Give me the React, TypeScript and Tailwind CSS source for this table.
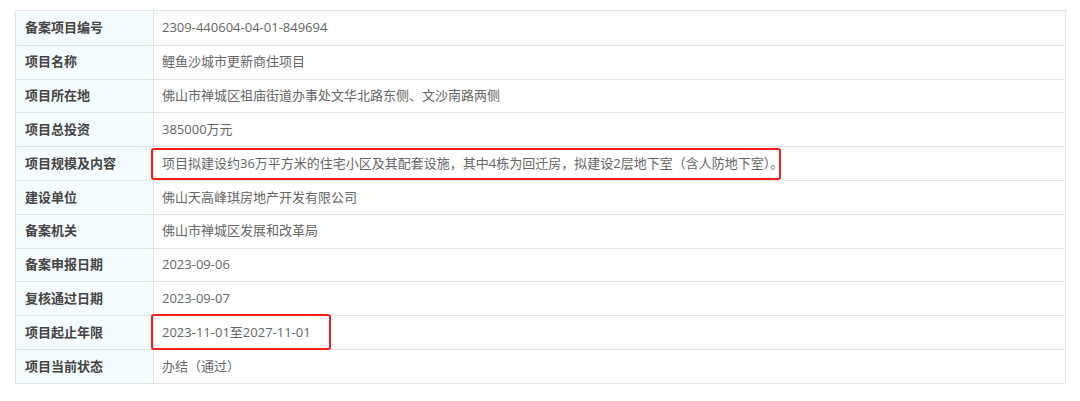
const ROWS: { label: string; value: string; mark?: 'wide' | 'date' }[] = [
  { label: '备案项目编号', value: '2309-440604-04-01-849694' },
  { label: '项目名称', value: '鲤鱼沙城市更新商住项目' },
  { label: '项目所在地', value: '佛山市禅城区祖庙街道办事处文华北路东侧、文沙南路两侧' },
  { label: '项目总投资', value: '385000万元' },
  {
    label: '项目规模及内容',
    value: '项目拟建设约36万平方米的住宅小区及其配套设施，其中4栋为回迁房，拟建设2层地下室（含人防地下室）。',
    mark: 'wide',
  },
  { label: '建设单位', value: '佛山天高峰琪房地产开发有限公司' },
  { label: '备案机关', value: '佛山市禅城区发展和改革局' },
  { label: '备案申报日期', value: '2023-09-06' },
  { label: '复核通过日期', value: '2023-09-07' },
  { label: '项目起止年限', value: '2023-11-01至2027-11-01', mark: 'date' },
  { label: '项目当前状态', value: '办结（通过）' },
];

export default function App() {
  return (
    <div
      className="w-[1080px] h-[401px] bg-white pt-[10px] pl-[15px]"
      style={{ fontFamily: '"Open Sans", "Noto Sans CJK SC", sans-serif' }}
    >
      <div className="w-[1051px] border border-[#e3e3e3] text-[13px]">
        {ROWS.map((row, i) => (
          <div
            key={row.label}
            className={`flex h-[33.8px] ${i > 0 ? 'border-t border-[#e3e3e3]' : ''}`}
          >
            <div className="w-[138px] shrink-0 bg-[#f5fcfd] border-r border-[#e3e3e3] flex items-center pl-[9px] font-bold text-[#444]">
              {row.label}
            </div>
            <div className="relative flex-1 flex items-center pl-[8px] text-[#666]">
              {row.value}
              {row.mark === 'wide' && (
                <div className="absolute left-[-3px] top-[1px] w-[630px] h-[32px] border-2 border-[#f21d1d] rounded-[3px]" />
              )}
              {row.mark === 'date' && (
                <div className="absolute left-[-3px] top-[-2px] w-[180px] h-[36px] border-2 border-[#f21d1d] rounded-[3px]" />
              )}
            </div>
          </div>
        ))}
      </div>
    </div>
  );
}
